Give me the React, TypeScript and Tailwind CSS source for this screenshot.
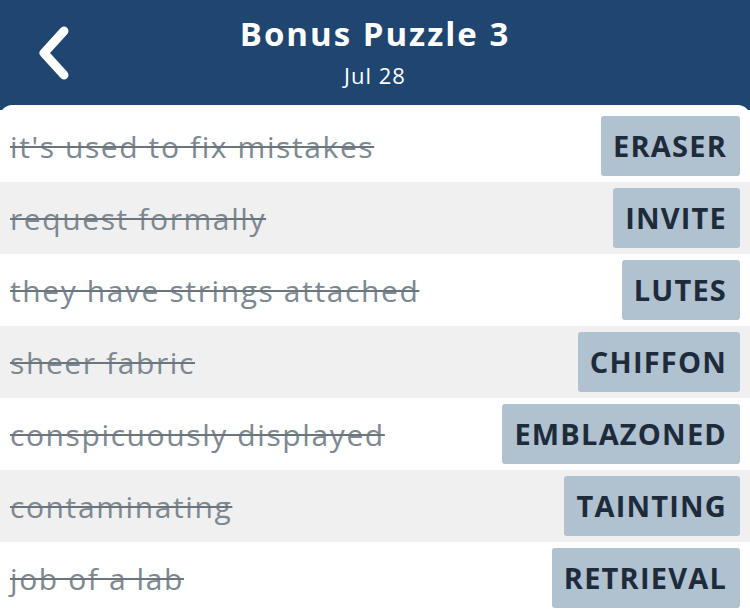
import React from 'react';

type Clue = { clue: string; answer: string };

const CLUES: Clue[] = [
  { clue: "it's used to fix mistakes", answer: 'ERASER' },
  { clue: 'request formally', answer: 'INVITE' },
  { clue: 'they have strings attached', answer: 'LUTES' },
  { clue: 'sheer fabric', answer: 'CHIFFON' },
  { clue: 'conspicuously displayed', answer: 'EMBLAZONED' },
  { clue: 'contaminating', answer: 'TAINTING' },
  { clue: 'job of a lab', answer: 'RETRIEVAL' },
];

const BackIcon: React.FC = () => (
  <svg width="36" height="54" viewBox="0 0 36 54" fill="none">
    <path d="M29 5 L9 27 L29 49" stroke="white" strokeWidth="9" strokeLinecap="round" strokeLinejoin="round" />
  </svg>
);

const App: React.FC = () => {
  return (
    <div className="w-[750px] h-[613px] overflow-hidden bg-[#1f4571] font-['Open_Sans','Noto_Sans',sans-serif]">
      {/* header */}
      <header className="relative h-[105px] flex flex-col items-center text-white">
        <button className="absolute left-[35px] top-[26px]" aria-label="Back">
          <BackIcon />
        </button>
        <h1 className="mt-[10px] text-[33px] leading-[48px] font-bold tracking-[2px]">Bonus Puzzle 3</h1>
        <p className="mt-[2px] text-[22px] leading-[30px] tracking-[1px]">Jul 28</p>
      </header>

      {/* clue list */}
      <main className="bg-white rounded-t-[12px] pt-[5px]">
        {CLUES.map((c, i) => (
          <div
            key={c.answer}
            className={`h-[72px] flex items-center justify-between pl-[10px] pr-[10px] ${i % 2 === 1 ? 'bg-[#f0f0f0]' : 'bg-white'}`}
          >
            <span className="text-[30px] tracking-[1.6px] text-[#7d8891] line-through decoration-[#6b757d] decoration-2">{c.clue}</span>
            <span className="h-[60px] flex items-center pl-[12px] pr-[13px] rounded-[3px] bg-[#b0c1d0] text-[29px] font-bold tracking-[1.2px] text-[#1d2b3a]">
              {c.answer}
            </span>
          </div>
        ))}
      </main>
    </div>
  );
};

export default App;
